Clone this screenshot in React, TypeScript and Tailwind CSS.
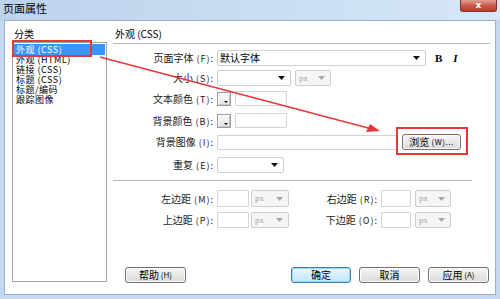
import React from 'react';

const FONT = "font-['Noto_Sans_CJK_SC','Noto_Sans',sans-serif]";

// small dropdown caret
function Caret({ gray }: { gray?: boolean }) {
  return (
    <svg width="7" height="4" viewBox="0 0 7 4" className="shrink-0">
      <polygon points="0,0 7,0 3.5,4" fill={gray ? '#a8a8a8' : '#111'} />
    </svg>
  );
}

function Select({ w, h = 16, text }: { w: number; h?: number; text?: string }) {
  return (
    <div
      className="flex items-center justify-between bg-white border border-[#cfcfcf] rounded-[2px] pl-[2px] pr-[5px]"
      style={{ width: w, height: h }}
    >
      <span className="text-[10px] leading-none text-black">{text}</span>
      <Caret />
    </div>
  );
}

function PxSelect({ w }: { w: number }) {
  return (
    <div
      className="flex items-center justify-between h-full bg-[#f5f5f5] border border-[#cdcdcd] rounded-[2px] pl-[3px] pr-[5px]"
      style={{ width: w }}
    >
      <span className="text-[9px] leading-none text-[#a5a5a5] font-['Liberation_Serif',serif]">px</span>
      <Caret gray />
    </div>
  );
}

function Input({ w }: { w: number }) {
  return <div className="h-full bg-white border border-[#d4d4d4] rounded-[1px]" style={{ width: w }} />;
}

function ColorBox() {
  return (
    <div className="relative w-[14px] h-[14px] border border-[#9a9a9a] bg-gradient-to-b from-[#fafafa] to-[#e2e2e2] shadow-[inset_1px_1px_0_#fff,inset_-1px_-1px_0_#c8c8c8]">
      <svg width="4" height="2" viewBox="0 0 4 2" className="absolute right-[2px] bottom-[2px]">
        <polygon points="0,0 4,0 2,2" fill="#111" />
      </svg>
    </div>
  );
}

function Label({ children, w = 104 }: { children: React.ReactNode; w?: number }) {
  return (
    <div className="text-right pr-[3px] text-[10px] leading-none text-[#1a1a1a] whitespace-nowrap" style={{ width: w }}>
      {children}
    </div>
  );
}

function Key({ k }: { k: string }) {
  return <span className="text-[9px] tracking-[1px]"> ({k}):</span>;
}

function WinButton({ children, def, w = 61 }: { children: React.ReactNode; def?: boolean; w?: number }) {
  return (
    <div
      className={`h-[16px] flex items-center justify-center rounded-[3px] text-[10px] leading-none text-black border ${
        def
          ? 'border-[#3c7fb1] bg-gradient-to-b from-[#eaf6fd] to-[#bee6fd] shadow-[inset_0_0_0_1px_#9fd5f5]'
          : 'border-[#707070] bg-gradient-to-b from-[#f6f6f6] to-[#dadada] shadow-[inset_0_0_0_1px_#fcfcfc]'
      }`}
      style={{ width: w }}
    >
      {children}
    </div>
  );
}

const categories = ['外观 (HTML)', '链接 (CSS)', '标题 (CSS)', '标题/编码', '跟踪图像'];

export default function App() {
  return (
    <div className={`relative w-[500px] h-[299px] overflow-hidden flex flex-col bg-[#c4d9f1] ${FONT}`}>
      {/* title bar */}
      <div className="h-[20px] flex justify-between bg-gradient-to-r from-[#bdd3ec] via-[#c8dcf2] to-[#d7e7f8]">
        <span className="pl-[3px] pt-[2px] text-[11px] leading-[12px] text-black">页面属性</span>
        <div className="mr-[3px] w-[37px] h-[12px] rounded-b-[3px] border border-t-0 border-[#8a2f2f] bg-gradient-to-b from-[#e0a093] via-[#cc5a4a] to-[#b83c2c] flex items-center justify-center">
          <span className="text-white text-[9px] font-bold leading-none font-['DejaVu_Sans',sans-serif]">x</span>
        </div>
      </div>

      {/* client area */}
      <div className="flex-1 mx-[4px] mb-[4px] bg-white border border-[#9db1c8] flex">
        {/* left: category list */}
        <div className="pl-[7px] pt-[7px] flex flex-col">
          <div className="h-[12px] pl-[2px] text-[10px] leading-[12px] text-black">分类</div>
          <div className="mt-[2px] w-[95px] h-[240px] border border-[#a3a3a3] pt-[1px] px-[1px]">
            <div className="h-[11px] bg-[#3399ff] text-white text-[9px] leading-[11px] pl-[2px] tracking-[0.5px]">外观 (CSS)</div>
            {categories.map((c) => (
              <div key={c} className="h-[10px] text-[9px] leading-[10px] pl-[2px] text-black tracking-[0.5px]">{c}</div>
            ))}
          </div>
        </div>

        {/* right: properties */}
        <div className="ml-[6px] pt-[7px] flex flex-col">
          <div className="h-[12px] pl-[2px] text-[10px] leading-[12px] text-black">外观 (CSS)</div>
          <div className="mt-[3px] w-[377px] border-t border-[#b8b8b8]" />

          <div className="mt-[6px] h-[16px] flex items-center">
            <Label>页面字体<Key k="F" /></Label>
            <Select w={209} text="默认字体" />
            <span className="ml-[9px] text-[11px] font-bold font-['Liberation_Serif',serif] leading-none">B</span>
            <span className="ml-[11px] text-[11px] font-bold italic font-['Liberation_Serif',serif] leading-none">I</span>
          </div>

          <div className="mt-[4px] h-[16px] flex items-center">
            <Label>大小<Key k="S" /></Label>
            <Select w={74} />
            <div className="ml-[4px] h-[16px]"><PxSelect w={36} /></div>
          </div>

          <div className="mt-[5px] h-[15px] flex items-center">
            <Label>文本颜色<Key k="T" /></Label>
            <ColorBox />
            <div className="ml-[4px] h-[15px]"><Input w={52} /></div>
          </div>

          <div className="mt-[7px] h-[15px] flex items-center">
            <Label>背景颜色<Key k="B" /></Label>
            <ColorBox />
            <div className="ml-[4px] h-[15px]"><Input w={52} /></div>
          </div>

          <div className="mt-[6px] h-[16px] flex items-center">
            <Label>背景图像<Key k="I" /></Label>
            <div className="h-[15px]"><Input w={180} /></div>
            <div className="ml-[5px]">
              <WinButton w={59}>浏览<span className="text-[8px] tracking-[0.5px]">&nbsp;(W)...</span></WinButton>
            </div>
          </div>

          <div className="mt-[7px] h-[16px] flex items-center">
            <Label>重复<Key k="E" /></Label>
            <Select w={67} />
          </div>

          <div className="mt-[7px] w-[359px] border-t border-[#b8b8b8]" />

          <div className="mt-[9px] h-[17px] flex items-center">
            <Label>左边距<Key k="M" /></Label>
            <Input w={32} />
            <div className="ml-[2px] h-full"><PxSelect w={38} /></div>
            <Label w={92}>右边距<Key k="R" /></Label>
            <Input w={30} />
            <div className="ml-[4px] h-full"><PxSelect w={36} /></div>
          </div>

          <div className="mt-[5px] h-[16px] flex items-center">
            <Label>上边距<Key k="P" /></Label>
            <Input w={32} />
            <div className="ml-[2px] h-full"><PxSelect w={38} /></div>
            <Label w={92}>下边距<Key k="O" /></Label>
            <Input w={30} />
            <div className="ml-[4px] h-full"><PxSelect w={36} /></div>
          </div>

          <div className="mt-[39px] flex items-center">
            <div className="ml-[12px]">
              <WinButton>帮助<span className="text-[8px]">&nbsp;(H)</span></WinButton>
            </div>
            <div className="ml-[105px] flex gap-[8px]">
              <WinButton def w={60}>确定</WinButton>
              <WinButton>取消</WinButton>
              <WinButton>应用<span className="text-[8px]">&nbsp;(A)</span></WinButton>
            </div>
          </div>
        </div>
      </div>

      {/* red annotations over the dialog */}
      <div className="absolute left-[12px] top-[40px] w-[80px] h-[17px] border-2 border-[#e8383a]" />
      <div className="absolute left-[396px] top-[127px] w-[72px] h-[28px] border-2 border-[#e8383a]" />
      <svg className="absolute inset-0 pointer-events-none" width="500" height="299">
        <line x1="100" y1="57" x2="372" y2="129" stroke="#e8383a" strokeWidth="1.6" />
        <polygon points="380,131 366,132 370,124" fill="#e8383a" />
      </svg>
    </div>
  );
}
